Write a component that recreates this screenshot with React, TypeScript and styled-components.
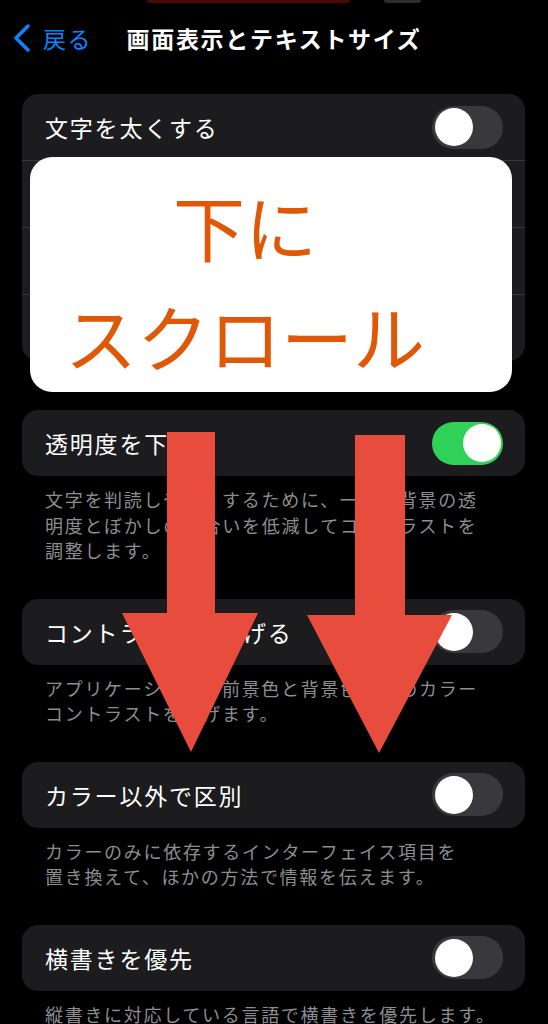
import React from 'react';
import styled, { createGlobalStyle } from 'styled-components';

const GlobalStyle = createGlobalStyle`
  html, body {
    margin: 0;
    padding: 0;
    background: #000;
  }
  body {
    font-family: "Noto Sans CJK JP", "Noto Sans", sans-serif;
    overflow: hidden;
  }
`;

type Row = { label: string; kind: 'toggle' | 'link'; on?: boolean };
type Section = { rows: Row[]; footer?: string[] };

const sections: Section[] = [
  {
    rows: [
      { label: '文字を太くする', kind: 'toggle' },
      { label: '文字を大きくする', kind: 'link' },
      { label: 'ボタンの形', kind: 'toggle' },
      { label: 'オン/オフラベル', kind: 'toggle' },
    ],
  },
  {
    rows: [{ label: '透明度を下げる', kind: 'toggle', on: true }],
    footer: [
      '文字を判読しやすくするために、一部の背景の透',
      '明度とぼかしの度合いを低減してコントラストを',
      '調整します。',
    ],
  },
  {
    rows: [{ label: 'コントラストを上げる', kind: 'toggle' }],
    footer: ['アプリケーションの前景色と背景色の間のカラー', 'コントラストを上げます。'],
  },
  {
    rows: [{ label: 'カラー以外で区別', kind: 'toggle' }],
    footer: ['カラーのみに依存するインターフェイス項目を', '置き換えて、ほかの方法で情報を伝えます。'],
  },
  {
    rows: [{ label: '横書きを優先', kind: 'toggle' }],
    footer: ['縦書きに対応している言語で横書きを優先します。'],
  },
];

const App: React.FC = () => {
  return (
    <Page>
      <GlobalStyle />
      <StatusStrip>
        <Pill $color="#4a0b08" $width={203} />
        <Pill $color="#2e2e30" $width={37} />
      </StatusStrip>

      <NavBar>
        <BackButton>
          <svg width="20" height="28" viewBox="0 0 20 28">
            <path d="M17 2 L5 14 L17 26" fill="none" stroke="#0a84ff" strokeWidth="3.4" strokeLinecap="round" strokeLinejoin="round" />
          </svg>
          <BackLabel>戻る</BackLabel>
        </BackButton>
        <Title>画面表示とテキストサイズ</Title>
        <span />
      </NavBar>

      <List>
        {sections.map((section, i) => (
          <div key={i}>
            <Card $alone={!section.footer}>
              {section.rows.map((row) => (
                <RowItem key={row.label}>
                  <Label>{row.label}</Label>
                  {row.kind === 'toggle' ? (
                    <Toggle $on={!!row.on}>
                      <Knob />
                    </Toggle>
                  ) : (
                    <svg width="12" height="20" viewBox="0 0 12 20">
                      <path d="M2 2 L10 10 L2 18" fill="none" stroke="#5a5a5f" strokeWidth="2.6" strokeLinecap="round" strokeLinejoin="round" />
                    </svg>
                  )}
                </RowItem>
              ))}
            </Card>
            {section.footer && (
              <Footer>
                {section.footer.map((line) => (
                  <FooterLine key={line}>{line}</FooterLine>
                ))}
              </Footer>
            )}
          </div>
        ))}
      </List>

      <Notice>
        <NoticeLine>下に</NoticeLine>
        <NoticeLine>スクロール</NoticeLine>
      </Notice>

      <Arrows width="548" height="1024" viewBox="0 0 548 1024">
        <polygon points="167,432 215,432 215,613 258,613 191,752 122,613 167,613" fill="#e84c3d" />
        <polygon points="355,435 405,435 405,615 452,615 379,753 307,615 355,615" fill="#e84c3d" />
      </Arrows>
    </Page>
  );
};

export default App;

const Page = styled.div`
  position: relative;
  width: 548px;
  height: 1024px;
  overflow: hidden;
  background: #000;
`;

const StatusStrip = styled.div`
  height: 3px;
  display: flex;
  gap: 34px;
  padding-left: 147px;
`;

const Pill = styled.div<{ $color: string; $width: number }>`
  width: ${(p) => p.$width}px;
  height: 3px;
  border-radius: 0 0 3px 3px;
  background: ${(p) => p.$color};
`;

const NavBar = styled.div`
  height: 70px;
  display: grid;
  grid-template-columns: 1fr auto 1fr;
  align-items: center;
`;

const BackButton = styled.div`
  display: flex;
  align-items: center;
  gap: 12px;
  padding-left: 11px;
`;

const BackLabel = styled.span`
  color: #0a84ff;
  font-size: 23px;
  letter-spacing: 1.5px;
`;

const Title = styled.h1`
  margin: 0;
  color: #fff;
  font-size: 23px;
  font-weight: 700;
  letter-spacing: 1.7px;
  white-space: nowrap;
`;

const List = styled.div`
  display: flex;
  flex-direction: column;
  padding: 21px 23px 0 22px;
`;

const Card = styled.div<{ $alone: boolean }>`
  background: #1c1c1e;
  border-radius: 16px;
  margin-bottom: ${(p) => (p.$alone ? '49px' : '0')};
  overflow: hidden;
`;

const RowItem = styled.div`
  height: 66px;
  display: flex;
  align-items: center;
  justify-content: space-between;
  padding: 0 22px 0 23px;

  & + & {
    border-top: 1px solid #38383a;
  }
`;

const Label = styled.span`
  color: #fff;
  font-size: 23px;
  letter-spacing: 1.8px;
  white-space: nowrap;
`;

const Toggle = styled.div<{ $on: boolean }>`
  width: 71px;
  height: 43px;
  box-sizing: border-box;
  padding: 2.5px;
  border-radius: 22px;
  display: flex;
  justify-content: ${(p) => (p.$on ? 'flex-end' : 'flex-start')};
  background: ${(p) => (p.$on ? '#30d158' : '#39393d')};
`;

const Knob = styled.div`
  width: 38px;
  height: 38px;
  border-radius: 50%;
  background: #fff;
`;

const Footer = styled.div`
  padding: 11px 23px 35px 23px;
`;

const FooterLine = styled.div`
  color: #8d8d93;
  font-size: 18px;
  line-height: 25.5px;
  letter-spacing: 1.7px;
  white-space: nowrap;
`;

const Notice = styled.div`
  position: absolute;
  top: 157px;
  left: 30px;
  width: 482px;
  height: 235px;
  box-sizing: border-box;
  padding: 13px 52px 0 0;
  background: #fff;
  border-radius: 22px;
  display: flex;
  flex-direction: column;
  align-items: center;
`;

const NoticeLine = styled.div`
  color: #e05806;
  font-size: 72px;
  line-height: 110px;
  font-weight: 400;
  white-space: nowrap;
`;

const Arrows = styled.svg`
  position: absolute;
  top: 0;
  left: 0;
  pointer-events: none;
`;
